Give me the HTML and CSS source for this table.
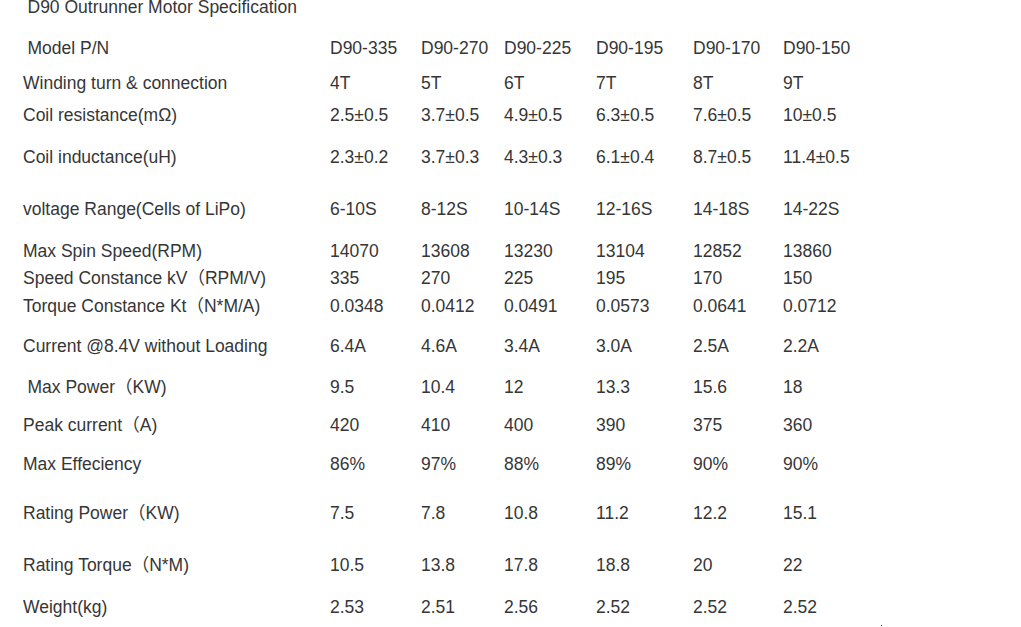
FILE: index.html
```html
<!DOCTYPE html>
<html>
<head>
<meta charset="utf-8">
<link rel="stylesheet" href="styles.css">
</head>
<body>
<div class="page">
  <div class="title">D90 Outrunner Motor Specification</div>
  <div class="spec">
    <div class="lbl ind">Model P/N</div><div>D90-335</div><div>D90-270</div><div>D90-225</div><div>D90-195</div><div>D90-170</div><div>D90-150</div>
    <div class="lbl">Winding turn &amp; connection</div><div>4T</div><div>5T</div><div>6T</div><div>7T</div><div>8T</div><div>9T</div>
    <div class="lbl">Coil resistance(mΩ)</div><div>2.5±0.5</div><div>3.7±0.5</div><div>4.9±0.5</div><div>6.3±0.5</div><div>7.6±0.5</div><div>10±0.5</div>
    <div class="lbl">Coil inductance(uH)</div><div>2.3±0.2</div><div>3.7±0.3</div><div>4.3±0.3</div><div>6.1±0.4</div><div>8.7±0.5</div><div>11.4±0.5</div>
    <div class="lbl">voltage Range(Cells of LiPo)</div><div>6-10S</div><div>8-12S</div><div>10-14S</div><div>12-16S</div><div>14-18S</div><div>14-22S</div>
    <div class="lbl">Max Spin Speed(RPM)</div><div>14070</div><div>13608</div><div>13230</div><div>13104</div><div>12852</div><div>13860</div>
    <div class="lbl">Speed Constance kV<span class="fw">（</span>RPM/V)</div><div>335</div><div>270</div><div>225</div><div>195</div><div>170</div><div>150</div>
    <div class="lbl">Torque Constance Kt<span class="fw">（</span>N*M/A)</div><div>0.0348</div><div>0.0412</div><div>0.0491</div><div>0.0573</div><div>0.0641</div><div>0.0712</div>
    <div class="lbl">Current @8.4V without Loading</div><div>6.4A</div><div>4.6A</div><div>3.4A</div><div>3.0A</div><div>2.5A</div><div>2.2A</div>
    <div class="lbl ind">Max Power<span class="fw">（</span>KW)</div><div>9.5</div><div>10.4</div><div>12</div><div>13.3</div><div>15.6</div><div>18</div>
    <div class="lbl">Peak current<span class="fw">（</span>A)</div><div>420</div><div>410</div><div>400</div><div>390</div><div>375</div><div>360</div>
    <div class="lbl">Max Effeciency</div><div>86%</div><div>97%</div><div>88%</div><div>89%</div><div>90%</div><div>90%</div>
    <div class="lbl">Rating Power<span class="fw">（</span>KW)</div><div>7.5</div><div>7.8</div><div>10.8</div><div>11.2</div><div>12.2</div><div>15.1</div>
    <div class="lbl">Rating Torque<span class="fw">（</span>N*M)</div><div>10.5</div><div>13.8</div><div>17.8</div><div>18.8</div><div>20</div><div>22</div>
    <div class="lbl">Weight(kg)</div><div>2.53</div><div>2.51</div><div>2.56</div><div>2.52</div><div>2.52</div><div>2.52</div>
  </div>
  <span class="dot"></span>
</div>
</body>
</html>
```

FILE: styles.css
```css
html, body {
  margin: 0;
  padding: 0;
  background: #ffffff;
}
.page {
  position: relative;
  width: 1021px;
  height: 627px;
  overflow: hidden;
  font-family: "Liberation Sans", Arial, "Noto Sans CJK SC", sans-serif;
  font-size: 17.5px;
  color: #363636;
  padding-left: 23px;
  box-sizing: border-box;
}
.title {
  line-height: 15px;
  padding-left: 4.5px;
}
.spec {
  margin-top: 24px;
  display: grid;
  grid-template-columns: 307px 91px 83px 92px 97px 90px 1fr;
  grid-template-rows: 35px 32px 42px 52px 42px 27px 28px 40px 41px 38px 39px 49px 52px 42px 18px;
  line-height: 18px;
  white-space: nowrap;
}
.ind {
  padding-left: 4.5px;
}
.fw {
  font-family: "Noto Sans CJK SC", sans-serif;
  line-height: 0;
}
.dot {
  position: absolute;
  left: 881px;
  top: 625px;
  width: 1px;
  height: 1px;
  background: #333333;
}
```
